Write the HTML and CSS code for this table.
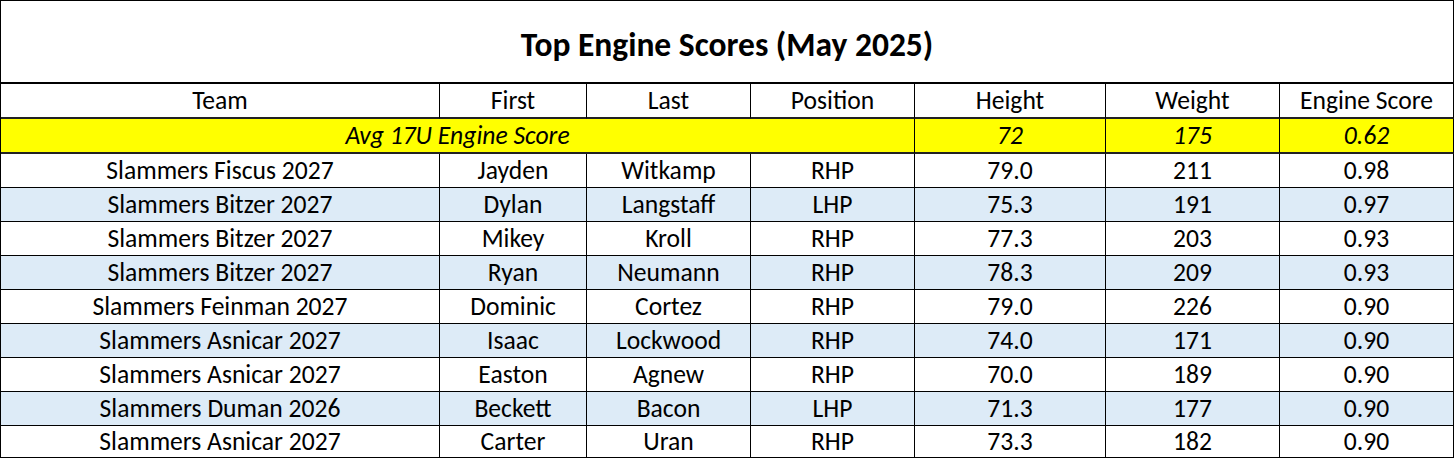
FILE: index.html
```html
<!DOCTYPE html>
<html>
<head>
<meta charset="utf-8">
<link rel="stylesheet" href="styles.css">
</head>
<body>
<div class="sheet">
  <div class="cell title">Top Engine Scores (May 2025)</div>

  <div class="cell head">Team</div>
  <div class="cell head">First</div>
  <div class="cell head">Last</div>
  <div class="cell head">Position</div>
  <div class="cell head">Height</div>
  <div class="cell head">Weight</div>
  <div class="cell head">Engine Score</div>

  <div class="cell avg avg-label">Avg 17U Engine Score</div>
  <div class="cell avg">72</div>
  <div class="cell avg">175</div>
  <div class="cell avg">0.62</div>

  <div class="cell">Slammers Fiscus 2027</div><div class="cell">Jayden</div><div class="cell">Witkamp</div><div class="cell">RHP</div><div class="cell">79.0</div><div class="cell">211</div><div class="cell">0.98</div>
  <div class="cell alt">Slammers Bitzer 2027</div><div class="cell alt">Dylan</div><div class="cell alt">Langstaff</div><div class="cell alt">LHP</div><div class="cell alt">75.3</div><div class="cell alt">191</div><div class="cell alt">0.97</div>
  <div class="cell">Slammers Bitzer 2027</div><div class="cell">Mikey</div><div class="cell">Kroll</div><div class="cell">RHP</div><div class="cell">77.3</div><div class="cell">203</div><div class="cell">0.93</div>
  <div class="cell alt">Slammers Bitzer 2027</div><div class="cell alt">Ryan</div><div class="cell alt">Neumann</div><div class="cell alt">RHP</div><div class="cell alt">78.3</div><div class="cell alt">209</div><div class="cell alt">0.93</div>
  <div class="cell">Slammers Feinman 2027</div><div class="cell">Dominic</div><div class="cell">Cortez</div><div class="cell">RHP</div><div class="cell">79.0</div><div class="cell">226</div><div class="cell">0.90</div>
  <div class="cell alt">Slammers Asnicar 2027</div><div class="cell alt">Isaac</div><div class="cell alt">Lockwood</div><div class="cell alt">RHP</div><div class="cell alt">74.0</div><div class="cell alt">171</div><div class="cell alt">0.90</div>
  <div class="cell">Slammers Asnicar 2027</div><div class="cell">Easton</div><div class="cell">Agnew</div><div class="cell">RHP</div><div class="cell">70.0</div><div class="cell">189</div><div class="cell">0.90</div>
  <div class="cell alt">Slammers Duman 2026</div><div class="cell alt">Beckett</div><div class="cell alt">Bacon</div><div class="cell alt">LHP</div><div class="cell alt">71.3</div><div class="cell alt">177</div><div class="cell alt">0.90</div>
  <div class="cell">Slammers Asnicar 2027</div><div class="cell">Carter</div><div class="cell">Uran</div><div class="cell">RHP</div><div class="cell">73.3</div><div class="cell">182</div><div class="cell">0.90</div>
</div>
</body>
</html>
```
FILE: styles.css
```css
html, body {
  margin: 0;
  padding: 0;
  background: #ffffff;
}

.sheet {
  display: grid;
  grid-template-columns: 439px 147px 164px 164px 191px 174px 174px;
  grid-template-rows: 83px 35px 35px repeat(8, 34px) 32px;
  width: max-content;
  border-left: 1px solid #000;
  border-top: 1px solid #000;
  font-family: "Carlito", "Lato", "Liberation Sans", sans-serif;
  font-size: 25.6px;
  color: #000;
}

.cell {
  box-sizing: border-box;
  border-right: 1px solid #000;
  border-bottom: 1px solid #000;
  display: flex;
  align-items: center;
  justify-content: center;
  white-space: nowrap;
  padding-top: 0;
  line-height: 1;
}

.title {
  grid-column: 1 / -1;
  border-bottom: 2px solid #000;
  font-weight: 700;
  font-size: 33.5px;
  padding-top: 6px;
}

.head {
  border-bottom: 2px solid #222;
}

.avg {
  background: #ffff00;
  font-style: italic;
  border-bottom: 2px solid #222;
}

.avg-label {
  grid-column: 1 / 5;
}

.alt {
  background: #ddebf7;
}
```
